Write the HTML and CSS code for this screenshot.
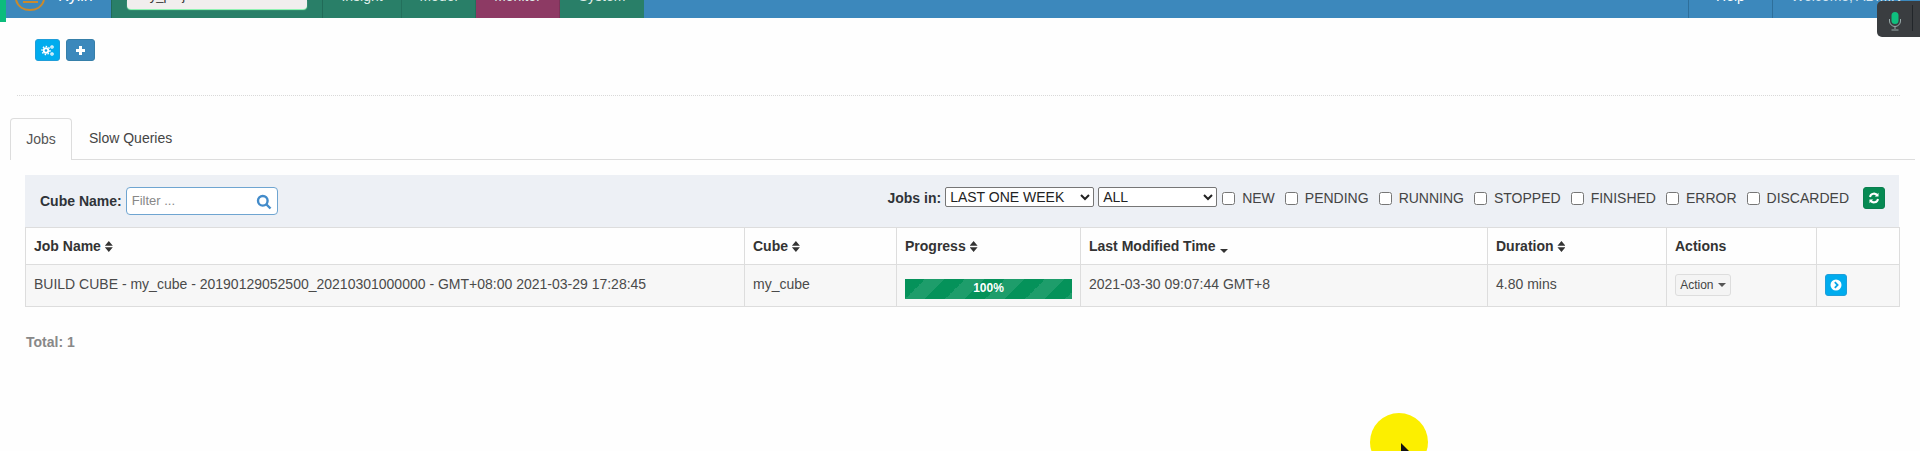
FILE: index.html
```html
<!DOCTYPE html>
<html lang="en">
<head>
<meta charset="utf-8">
<title>Kylin Monitor</title>
<link rel="stylesheet" href="styles.css">
</head>
<body>
<header class="navbar">
  <div class="brand"><svg class="logo" width="30" height="11" viewBox="0 0 30 11"><path d="M1 0 C3 7 9 10 15 10 C21 10 27 7 29 0" fill="none" stroke="#c98a2e" stroke-width="2"/><path d="M8 2 H23" stroke="#c98a2e" stroke-width="2"/></svg><span class="brand-name">Kylin</span></div>
  <div class="project-slot"><div class="project-select"><span class="clip-text">my_project</span></div></div>
  <a class="nav-item insight"><span class="clip-text">Insight</span></a>
  <a class="nav-item model"><span class="clip-text">Model</span></a>
  <a class="nav-item monitor"><span class="clip-text">Monitor</span></a>
  <a class="nav-item system"><span class="clip-text">System</span></a>
  <div class="nav-spacer"></div>
  <a class="nav-right help"><span class="clip-text">Help</span></a>
  <a class="nav-right user"><span class="clip-text">Welcome, ADMIN</span></a>
</header>
<div class="green-tab"></div>
<div class="recorder"><svg width="14" height="20" viewBox="0 0 14 20"><rect x="3.500" y="1" width="7" height="12" rx="3.500" fill="#0fbf7e"/><path d="M1.500 8 v2 a5.500 5.500 0 0 0 11 0 v-2 M7 16 v2 M3.500 19 h7" stroke="#9aa" fill="none"/></svg><i class="recorder-sep"></i></div>
<main class="page">
  <div class="toolbar">
    <button class="icon-btn info" aria-label="Settings"><svg width="14" height="13" viewBox="0 0 14 13" fill="#fff"><circle cx="5" cy="6.500" r="3.200"/><circle cx="5" cy="6.500" r="4" fill="none" stroke="#fff" stroke-dasharray="1.500 1.500" stroke-width="1.300"/><circle cx="11" cy="3" r="1.800"/><circle cx="11" cy="10" r="1.800"/><circle cx="5" cy="6.500" r="1.300" fill="#0aa5e6"/><circle cx="11" cy="3" r="0.600" fill="#0aa5e6"/><circle cx="11" cy="10" r="0.600" fill="#0aa5e6"/></svg></button>
    <button class="icon-btn primary" aria-label="Add"><svg width="11" height="11" viewBox="0 0 11 11" fill="#fff"><path d="M4 1h3v3h3v3H7v3H4V7H1V4h3z"/></svg></button>
  </div>
  <hr class="rule">
  <ul class="tabs">
    <li class="tab active">Jobs</li>
    <li class="tab">Slow Queries</li>
  </ul>
  <section class="panel">
    <div class="filters">
      <label class="cube-filter"><b>Cube Name:</b>
        <span class="search"><span class="placeholder">Filter ...</span><svg width="16" height="16" viewBox="0 0 16 16" fill="none" stroke="#428bca" stroke-width="2.400"><circle cx="6.800" cy="6.800" r="4.800"/><path d="M10.500 10.500 L14.500 14.500"/></svg></span>
      </label>
      <div class="job-filter">
        <b class="jobs-in">Jobs in:</b>
        <select class="sel week"><option>LAST ONE WEEK</option></select>
        <select class="sel all"><option>ALL</option></select>
        <label class="chk first"><input type="checkbox">NEW</label>
        <label class="chk"><input type="checkbox">PENDING</label>
        <label class="chk"><input type="checkbox">RUNNING</label>
        <label class="chk"><input type="checkbox">STOPPED</label>
        <label class="chk"><input type="checkbox">FINISHED</label>
        <label class="chk"><input type="checkbox">ERROR</label>
        <label class="chk"><input type="checkbox">DISCARDED</label>
        <button class="refresh" aria-label="Refresh"><svg width="12" height="12" viewBox="0 0 12 12" fill="none" stroke="#fff" stroke-width="2"><path d="M2 5 a4 4 0 0 1 7.500 -1.200 M10 7 a4 4 0 0 1 -7.500 1.200"/><path d="M10.500 0.800 v3.700 h-3.700 z M1.500 11.200 v-3.700 h3.700 z" fill="#fff" stroke="none"/></svg></button>
      </div>
    </div>
    <table class="jobs">
      <colgroup><col class="c1"><col class="c2"><col class="c3"><col class="c4"><col class="c5"><col class="c6"><col class="c7"></colgroup>
      <thead>
        <tr>
          <th>Job Name <i class="sort"></i></th>
          <th>Cube <i class="sort"></i></th>
          <th>Progress <i class="sort"></i></th>
          <th>Last Modified Time <i class="caret dark"></i></th>
          <th>Duration <i class="sort"></i></th>
          <th>Actions</th>
          <th></th>
        </tr>
      </thead>
      <tbody>
        <tr>
          <td>BUILD CUBE - my_cube - 20190129052500_20210301000000 - GMT+08:00 2021-03-29 17:28:45</td>
          <td>my_cube</td>
          <td><div class="progress">100%</div></td>
          <td>2021-03-30 09:07:44 GMT+8</td>
          <td>4.80 mins</td>
          <td><button class="action">Action <i class="caret"></i></button></td>
          <td><button class="detail" aria-label="Details"><svg width="12" height="12" viewBox="0 0 12 12"><circle cx="6" cy="6" r="5.500" fill="#fff"/><path d="M4.800 3.200 L7.600 6 L4.800 8.800" fill="none" stroke="#0aa5e6" stroke-width="1.800"/></svg></button></td>
        </tr>
      </tbody>
    </table>
    <p class="total">Total: 1</p>
  </section>
</main>
<div class="cursor-halo"><svg width="14" height="18" viewBox="0 0 14 18" class="arrow"><path d="M1 0 L13 12 L7 12 L10 18 L7 18 L4 13 L1 16 Z" fill="#111"/></svg></div>
</body>
</html>
```
FILE: styles.css
```css
* { box-sizing: border-box; }
html, body { margin: 0; height: 451px; overflow: hidden; background: #fefefe; }
body { font-family: "Liberation Sans", Arial, sans-serif; font-size: 13px; color: #333; position: relative; }

.navbar { height: 18px; background: #3c88bc; display: flex; color: #fff; overflow: hidden; font-size: 14px; white-space: nowrap; line-height: 0; }
.brand { width: 111px; flex: none; display: flex; padding-left: 15px; }
.logo { flex: none; }
.brand-name { margin: -4px 0 0 13px; font-size: 16px; line-height: 0; display: block; }
.clip-text { display: block; margin-top: -4px; line-height: 0; }
.project-slot { width: 212px; flex: none; background: #297f68; border-left: 1px solid #216b58; border-right: 1px solid #216b58; padding: 0 0 0 15px; }
.project-select { width: 180px; height: 9px; background: #f1eeee; border-radius: 0 0 4px 4px; color: #333; padding-left: 12px; font-size: 13px; overflow: hidden; box-shadow: 0 1px 1px #9fb; }
.nav-item { flex: none; text-align: center; background: #297f68; border-right: 1px solid #23705c; color: #dfeee9; }
.insight { width: 79px; }
.model { width: 74px; }
.monitor { width: 84px; background: #8d3a64; border-right-color: #7a3358; }
.system { width: 84px; border-right: 0; }
.nav-spacer { flex: 1; }
.nav-right { flex: none; border-left: 1px solid #2e6f9b; text-align: center; }
.help { width: 84px; }
.user { width: 148px; text-align: left; padding-left: 18px; color: #d5e6f1; }

.green-tab { position: absolute; left: 0; top: 0; width: 6px; height: 22px; background: #0cbc7c; }
.recorder { position: absolute; right: 0; top: 1px; width: 43px; height: 36px; background: #3a3d40; border-radius: 5px 0 0 5px; padding: 10px 0 0 11px; display: flex; align-items: flex-start; }
.recorder-sep { position: absolute; left: 35px; top: 4px; height: 26px; width: 1px; background: #22262a; }

.page { display: block; }
.toolbar { display: flex; gap: 6px; padding: 21px 0 0 35px; height: 43px; }
.icon-btn { width: 25px; height: 22px; padding: 0; border: 1px solid #1f9ed9; border-radius: 3px; display: flex; align-items: center; justify-content: center; }
.icon-btn.info { background: #00acee; }
.icon-btn.primary { width: 29px; background: #3c88bc; border-color: #367fa9; }
.rule { margin: 34px 0 0 17px; width: 1883px; height: 0; border: 0; border-top: 1px dotted #d9d9d9; }

.tabs { list-style: none; margin: 22px 5px 0 10px; padding: 0; height: 42px; display: flex; border-bottom: 1px solid #ddd; font-size: 14px; }
.tab { height: 41px; padding: 0 17px; line-height: 40px; color: #444; }
.tab.active { width: 62px; padding: 0; text-align: center; color: #555; background: #fefefe; border: 1px solid #ddd; border-bottom: 0; border-radius: 4px 4px 0 0; height: 42px; }

.panel { margin: 15px 0 0 25px; width: 1874px; }
.filters { height: 52px; background: #edf0f5; display: flex; justify-content: space-between; padding: 12px 14px 0 15px; }
.cube-filter { display: flex; align-items: flex-start; gap: 4px; font-size: 14px; line-height: 28px; color: #2f3338; }
.search { width: 152px; height: 28px; background: #fff; border: 1px solid #6fa5d1; border-radius: 4px; display: flex; justify-content: space-between; align-items: center; padding: 2px 5px 0 5px; font-size: 13px; }
.placeholder { color: #888; line-height: 20px; margin-top: -2px; }
.job-filter { display: flex; align-items: flex-start; font-size: 14px; color: #444; line-height: 22px; }
.jobs-in { color: #2f3338; margin-right: 4px; }
.sel { height: 20px; font: 14px "Liberation Sans", Arial, sans-serif; background: #fff; border: 1px solid #767676; border-radius: 2px; color: #222; padding: 0; margin-top: 0; }
.week { width: 149px; margin-right: 4px; }
.all { width: 119px; }
.chk { display: flex; align-items: flex-start; margin-left: 10px; white-space: nowrap; }
.chk.first { margin-left: 5px; }
.chk input { width: 13px; height: 13px; margin: 5px 7px 0 0; }
.refresh { width: 22px; height: 22px; margin: 0 0 0 14px; padding: 0; background: #068a53; border: 1px solid #0a7f4f; border-radius: 3px; display: flex; align-items: center; justify-content: center; }

.jobs { width: 1874px; border-collapse: collapse; table-layout: fixed; background: #fefefe; }
.c1 { width: 719px; } .c2 { width: 152px; } .c3 { width: 184px; } .c4 { width: 407px; } .c5 { width: 179px; } .c6 { width: 150px; } .c7 { width: 83px; }
.jobs th, .jobs td { border: 1px solid #ddd; padding: 0 8px; text-align: left; vertical-align: middle; }
.jobs th { height: 37px; font-size: 14px; color: #333; }
.jobs td { height: 42px; font-size: 14px; color: #4a4a4a; background: #f7f7f7; padding-bottom: 4px; }
.sort { display: inline-block; width: 8px; height: 11px; margin-left: 0; vertical-align: -1px; background: #333; clip-path: polygon(50% 0, 100% 43%, 0 43%, 0 57%, 100% 57%, 50% 100%, 0 57%, 0 43%); }
.caret { display: inline-block; width: 0; height: 0; border-left: 4px solid transparent; border-right: 4px solid transparent; border-top: 4px solid #555; vertical-align: middle; margin-left: 1px; }
.caret.dark { border-top-color: #333; vertical-align: -2px; }
.progress { height: 20px; margin-top: 10px; text-align: center; color: #fff; font-size: 12px; font-weight: bold; line-height: 18px; background: #05925a linear-gradient(-45deg, #ffffff1a 25%, transparent 25%, transparent 50%, #ffffff1a 50%, #ffffff1a 75%, transparent 75%) 0 0 / 40px 40px; }
.action { height: 22px; width: 56px; padding: 0; font: 12px "Liberation Sans", Arial, sans-serif; color: #444; background: #f4f4f4; border: 1px solid #ddd; border-radius: 3px; margin-top: 2px; }
.detail { width: 22px; height: 22px; padding: 0; background: #00acee; border: 1px solid #1f9ed9; border-radius: 3px; display: flex; align-items: center; justify-content: center; margin: 2px 0 0 0; }
.total { margin: 25px 0 0 1px; font-size: 14px; font-weight: bold; color: #888; line-height: 20px; }

.cursor-halo { position: absolute; left: 1370px; top: 413px; width: 58px; height: 58px; border-radius: 50%; background: #fcef00; }
.arrow { position: absolute; left: 30px; top: 30px; }
```
